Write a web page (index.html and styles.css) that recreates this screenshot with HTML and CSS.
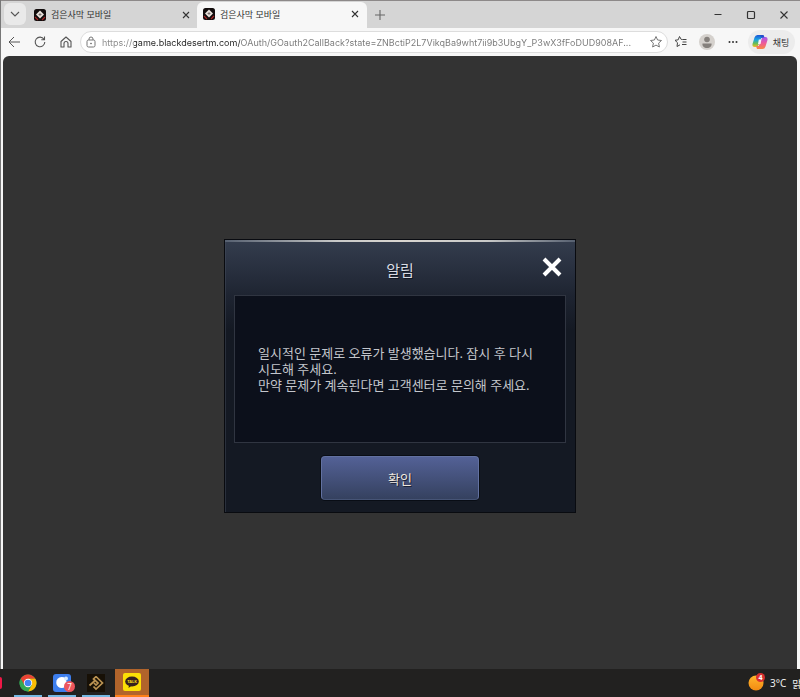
FILE: index.html
```html
<!DOCTYPE html>
<html lang="ko">
<head>
<meta charset="utf-8">
<meta name="viewport" content="width=device-width, initial-scale=1">
<title>검은사막 모바일</title>
<link rel="stylesheet" href="styles.css">
</head>
<body>
<svg width="0" height="0" class="defs" aria-hidden="true">
  <defs>
    <symbol id="game" viewBox="0 0 12 12">
      <rect width="12" height="12" rx="2.5" fill="#120c0c"/>
      <path d="M1 8l3 3M11 8l-3 3" stroke="#a32424" stroke-width="1.2"/>
      <path d="M6 1.500L10 5.500 6 9.500 2 5.500z" fill="#e9e2dc"/>
      <path d="M6 4v3M4.500 5.500h3" stroke="#6a6060" stroke-width=".8"/>
    </symbol>
    <symbol id="close" viewBox="0 0 10 10">
      <path d="M2 2l6 6M8 2l-6 6" stroke="#333" stroke-width="1.100" fill="none"/>
    </symbol>
    <linearGradient id="cool" x1="0" y1="0" x2="0" y2="1"><stop offset="0" stop-color="#1b55d8"/><stop offset=".4" stop-color="#1aa5e0"/><stop offset=".7" stop-color="#65bd57"/><stop offset="1" stop-color="#f5bd20"/></linearGradient>
    <linearGradient id="warm" x1="0" y1="0" x2="0" y2="1"><stop offset="0" stop-color="#a45af0"/><stop offset=".5" stop-color="#ee5a9a"/><stop offset="1" stop-color="#f98842"/></linearGradient>
    <linearGradient id="sun" x1="0" y1="0" x2="0" y2="1"><stop offset="0" stop-color="#ffb62c"/><stop offset="1" stop-color="#f28a12"/></linearGradient>
  </defs>
</svg>
<div class="desktop">
  <section class="browser">
    <header class="tabs">
      <button class="tab-menu" aria-label="탭 메뉴"><svg width="10" height="10" viewBox="0 0 10 10"><path d="M1 3l4 4 4-4" fill="none" stroke="#555" stroke-width="1.100"/></svg></button>
      <div class="tab">
        <svg width="12" height="12"><use href="#game"/></svg>
        <span class="tab-title">검은사막 모바일</span>
        <button aria-label="탭 닫기"><svg width="10" height="10"><use href="#close"/></svg></button>
      </div>
      <div class="tab active">
        <svg width="12" height="12"><use href="#game"/></svg>
        <span class="tab-title">검은사막 모바일</span>
        <button aria-label="탭 닫기"><svg width="10" height="10"><use href="#close"/></svg></button>
      </div>
      <button class="new-tab" aria-label="새 탭"><svg width="12" height="12" viewBox="0 0 12 12"><path d="M6 1v10M1 6h10" stroke="#666" stroke-width="1.100"/></svg></button>
      <div class="window-controls">
        <button aria-label="최소화"><svg width="10" height="10" viewBox="0 0 10 10"><path d="M1.500 4.500h7" stroke="#333"/></svg></button>
        <button aria-label="최대화"><svg width="10" height="10" viewBox="0 0 10 10"><rect x="1.500" y="1.500" width="7" height="7" rx="1" fill="none" stroke="#333" stroke-width="1.200"/></svg></button>
        <button aria-label="닫기"><svg width="10" height="10" viewBox="0 0 10 10"><path d="M1.500 1.500l7 7M8.500 1.500l-7 7" stroke="#333" stroke-width="1.100"/></svg></button>
      </div>
    </header>
    <nav class="toolbar">
      <button aria-label="뒤로"><svg width="14" height="14" viewBox="0 0 14 14" fill="none" stroke="#555"><path d="M13 7H2M7 2L2 7l5 5"/></svg></button>
      <button aria-label="새로 고침"><svg width="14" height="14" viewBox="0 0 14 14" fill="none" stroke="#555" stroke-width="1.100"><path d="M11 4.300A4.800 4.800 0 1 0 11.800 7M11.500 1.500v3.200H8.300"/></svg></button>
      <button aria-label="홈"><svg width="14" height="14" viewBox="0 0 14 14" fill="none" stroke="#555" stroke-width="1.100"><path d="M2 6.500L7 2l5 4.500V12H9V8.500a2 2 0 0 0-4 0V12H2z" stroke-linejoin="round"/></svg></button>
      <div class="address">
        <svg width="12" height="12" viewBox="0 0 12 12" fill="none" stroke="#777"><rect x="2" y="4" width="8" height="7" rx="1.500"/><path d="M4 4V3a2 2 0 0 1 4 0v1"/><circle cx="6" cy="7.500" r=".5" fill="#777"/></svg>
        <input type="text" aria-label="주소" value="https://game.blackdesertm.com/OAuth/GOauth2CallBack?state=ZNBctiP2L7VikqBa9wht7ii9b3UbgY_P3wX3fFoDUD908AF...">
        <button aria-label="즐겨찾기에 추가"><svg width="14" height="14" viewBox="0 0 14 14" fill="none" stroke="#777"><path d="M7 1.500l1.600 3.500 3.900.5-2.900 2.600.8 3.900L7 10.100 3.600 12l.8-3.900L1.500 5.500 5.400 5z" stroke-linejoin="round"/></svg></button>
      </div>
      <button aria-label="즐겨찾기"><svg width="14" height="14" viewBox="0 0 14 14" fill="none" stroke="#444"><path d="M8.500 4.500H7.300L5.500 1.500 4.200 4.800 1 5.300 3.500 7.700 3 11.500 6 9.800M8.500 4.500h4M8.500 7h4M8 9.500h4.500" stroke-linejoin="round"/></svg></button>
      <button aria-label="프로필"><svg width="16" height="16" viewBox="0 0 16 16"><circle cx="8" cy="8" r="8" fill="#d5d1cd"/><circle cx="8" cy="5.500" r="2.800" fill="#85807c"/><path d="M3.500 9.500h9c.5 2.500-1.500 4.500-4.500 4.500S3 12 3.500 9.500z" fill="#85807c"/></svg></button>
      <button aria-label="설정 및 기타"><svg width="12" height="12" viewBox="0 0 12 12" fill="#333"><circle cx="2.500" cy="6" r="1"/><circle cx="6" cy="6" r="1"/><circle cx="9.500" cy="6" r="1"/></svg></button>
      <button class="chat"><svg width="16" height="16" viewBox="0 0 16 16"><path d="M5.500 1H11l1 3H9.200L6.500 11Q6 13 4 13H2.500Q0 13 .5 10L2.500 3.500Q3.300 1 5.500 1z" fill="url(#cool)"/><path d="M10.500 15H5l-1-3h2.800L9.500 5Q10 3 12 3h1.500Q16 3 15.500 6l-2 6.500Q12.700 15 10.500 15z" fill="url(#warm)"/><path d="M6.800 5.500h2.600L8.600 10H6z" fill="#f7f4f8"/><path d="M8 1h3q1 0 1.400 2.400h-3z" fill="#244ecb"/></svg>채팅</button>
    </nav>
    <main class="page">
      <div class="dialog" role="dialog" aria-labelledby="dialog-title">
        <div class="dialog-head">
          <h1 id="dialog-title">알림</h1>
          <button class="dialog-close" aria-label="닫기"><svg width="20" height="20" viewBox="0 0 20 20"><path d="M2 2l16 16M18 2L2 18" stroke="#fff" stroke-width="4"/></svg></button>
        </div>
        <div class="message">
          <p>일시적인 문제로 오류가 발생했습니다. 잠시 후 다시 시도해 주세요.<br>만약 문제가 계속된다면 고객센터로 문의해 주세요.</p>
        </div>
        <button class="confirm">확인</button>
      </div>
    </main>
  </section>
  <footer class="taskbar">
    <span class="edge-app"></span>
    <button class="app" aria-label="Chrome"><svg width="18" height="18" viewBox="0 0 18 18"><circle cx="9" cy="9" r="8.500" fill="#34a853"/><path d="M9 9L1.640 4.750A8.500 8.500 0 0 1 16.360 4.750H9z" fill="#ea4335"/><path d="M9 4.750h7.360A8.500 8.500 0 0 1 9 17.500l3.700-6.400z" fill="#fbbc05"/><path d="M1.640 4.750L5.300 11.100 9 9 9 4.700z" fill="#ea4335"/><path d="M1.640 4.750A8.500 8.500 0 0 0 9 17.500l3.700-6.400H5.300z" fill="#34a853"/><circle cx="9" cy="9" r="4.200" fill="#fff"/><circle cx="9" cy="9" r="3.300" fill="#4285f4"/></svg></button>
    <button class="app" aria-label="메신저, 알림 7개"><svg width="18" height="18" viewBox="0 0 18 18"><rect width="18" height="18" rx="3" fill="#3d7eed"/><path d="M12.500 4.500A5.500 5.500 0 1 0 13 12l1-2.500z" fill="#fff"/><circle cx="13" cy="4.500" r="2" fill="#d7eaff"/></svg><span class="badge">7</span></button>
    <button class="app" aria-label="게임 런처"><svg width="18" height="18" viewBox="0 0 18 18"><rect width="18" height="18" fill="#171006"/><path d="M9 2.500l6.500 6.500L9 15l-2.500-2.500M9 2.500L6.500 5l4.500 4-2 2-2-2M7.500 7L2.500 11.500" fill="none" stroke="#bb9352" stroke-width="1.700"/></svg></button>
    <button class="app talk" aria-label="카카오톡"><span class="talk-tile"><svg width="14" height="12" viewBox="0 0 14 12"><ellipse cx="7" cy="5.500" rx="6.800" ry="5" fill="#35211f"/><path d="M4 9l-.5 3L7 9.500z" fill="#35211f"/></svg><span class="talk-word">TALK</span></span></button>
    <div class="weather">
      <span class="sun"><svg width="16" height="16" viewBox="0 0 16 16"><circle cx="8" cy="8" r="7.500" fill="url(#sun)"/></svg><span class="sun-badge">4</span></span>
      <span>3°C</span><span class="sky">맑음</span>
    </div>
  </footer>
</div>
</body>
</html>
```
FILE: styles.css
```css
* { box-sizing: border-box; }
body { margin: 0; overflow: hidden; font-family: "Noto Sans", "Noto Sans CJK KR", sans-serif; font-size: 10px; color: #333; }
button { display: flex; align-items: center; justify-content: center; border: 0; padding: 0; background: none; color: inherit; font: inherit; }
svg { display: block; flex: none; }
.defs { position: absolute; }
.desktop { display: flex; flex-direction: column; min-height: 100vh; }
.browser { flex: 1; display: flex; flex-direction: column; background: #f7f7f7; border-left: 1px solid #777; }

.tabs { display: flex; height: 28px; background: #d5d5d5; border-top: 1px solid #8d8989; }
.tab-menu { width: 22px; margin: 2px 0 3px 3px; border-radius: 6px; background: #e9e9e9; }
.tab { display: flex; align-items: center; gap: 5px; width: 170px; padding: 0 7px 2px 6px; }
.tab-menu + .tab { margin-left: 2px; }
.tab-title { flex: 1; font-size: 9px; }
.active { margin-top: 1px; background: #f7f7f7; border-radius: 6px 6px 0 0; }
.tab:not(.active) { width: 169px; padding: 0 6px 0 6px; }
.new-tab { width: 26px; }
.window-controls { display: flex; margin-left: auto; }
.window-controls button { width: 33px; }

.toolbar { display: flex; align-items: center; height: 28px; padding: 0 5px 0 0; }
.toolbar > button { width: 26px; height: 24px; }
.address { flex: 1; display: flex; align-items: center; gap: 5px; min-width: 0; height: 22px; margin-left: 1px; padding: 0 4px; border: 1px solid #ddd; border-radius: 11px; background: #fff; }
.address input { flex: 1; min-width: 0; padding: 0; border: 0; outline: 0; font: 9px Inter, sans-serif; color: transparent; background: linear-gradient(90deg, #888 32px, #222 32px, #222 138px, #777 138px); -webkit-background-clip: text; background-clip: text; }
.toolbar .chat { width: 47px; gap: 5px; margin-left: 2px; padding: 0 5px 0 3px; border-radius: 12px; background: #ececec; font-size: 9px; }

.page { flex: 1; display: flex; justify-content: center; align-items: flex-start; margin: 0 3px 0 2px; padding: 183px 8px 16px; border-radius: 6px 6px 0 0; background: #333; }
.dialog { display: flex; flex-direction: column; width: 352px; padding: 0 9px 12px; border: 1px solid #090b10; background: linear-gradient(#343d4e, #1e2431 56px, #141923 90px); box-shadow: inset 1px 1px 0 #4a526266; }
.dialog::before { content: ""; height: 2px; margin: 0 -9px; background: linear-gradient(90deg, #566070, #c8c9c8 32%, #d8d5d0 50%, #c8c9c8 75%, #566070); }
.dialog-head { display: grid; grid-template-columns: 24px 1fr 24px; align-items: center; height: 53px; padding: 0 0 4px; color: #d8dbe3; }
.dialog-head h1 { grid-column: 2; margin: 6px 0 0; text-align: center; font-size: 15px; font-weight: 400; line-height: 20px; text-shadow: 1px 1px 0 #111722; }
.dialog-close { height: 24px; margin-right: 5px; }
.message { display: flex; flex-direction: column; justify-content: center; min-height: 148px; padding: 0 23px; border: 1px solid #303541; background: #0c101b; color: #c3c6cc; font-size: 13px; line-height: 16px; word-break: keep-all; }
.message p { margin: 0; }
.confirm { align-self: center; width: 158px; height: 44px; margin-top: 13px; border: 1px solid #6271a0; border-bottom-color: #465476; border-radius: 4px; background: linear-gradient(#536196, #35415f); box-shadow: 0 0 0 1px #090d15; color: #efe7df; font-size: 13px; text-shadow: 1px 1px 0 #1a2135; }

.taskbar { display: flex; height: 28px; background: #222120; color: #eee; }
.edge-app { width: 2px; height: 12px; margin: 8px 9px 0 0; border-radius: 0 6px 6px 0; background: #ef1746; }
.app { position: relative; width: 34px; }
.app:not(.talk)::after { content: ""; position: absolute; bottom: 0; left: 3px; right: 3px; height: 2px; background: #75b8e3; }
.badge { position: absolute; top: 12px; left: 19px; width: 11px; height: 11px; border-radius: 50%; background: #ed555d; color: #fff; font-size: 8px; line-height: 11px; }
.talk { margin-left: 2px; background: #b1642b; border-bottom: 2px solid #ff7f19; }
.talk-tile { display: grid; place-items: center; width: 18px; height: 18px; border-radius: 2px; background: #fbdf06; }
.talk-tile > * { grid-area: 1 / 1; }
.talk-word { color: #f7dd18; font-size: 4px; font-weight: 700; line-height: 4px; }
.weather { display: flex; align-items: center; gap: 6px; width: 52px; margin-left: auto; overflow: hidden; white-space: nowrap; }
.sun { position: relative; }
.sun-badge { position: absolute; top: -2px; right: -1px; width: 9px; height: 9px; border-radius: 50%; background: #d83030; color: #fff; font-size: 7px; font-weight: 700; line-height: 9px; text-align: center; }
```
